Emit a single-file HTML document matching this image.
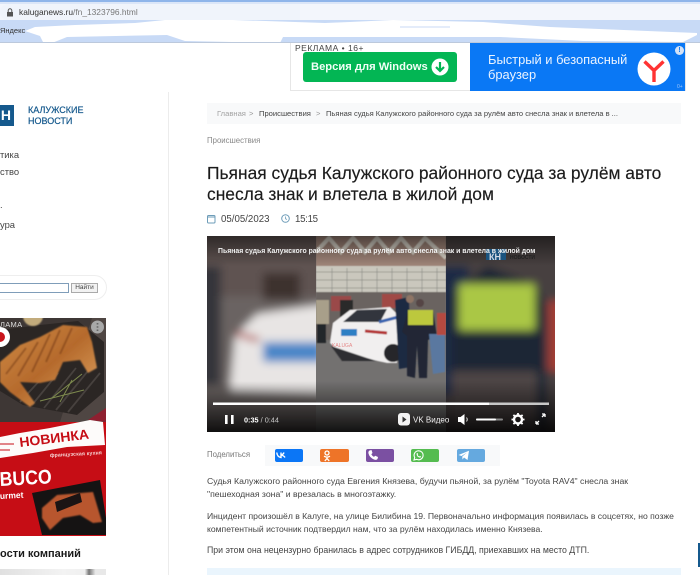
<!DOCTYPE html>
<html lang="ru"><head><meta charset="utf-8"><title>Калужские новости</title>
<style>
html,body{margin:0;padding:0;background:#fff}
body{width:700px;height:575px;overflow:hidden;position:relative;font-family:"Liberation Sans","Noto Sans CJK SC",sans-serif}
.a{position:absolute;white-space:nowrap}
svg{display:block}
.s{position:absolute;top:449px;height:13px;border-radius:2px}
</style></head><body>

<!-- browser chrome -->
<div class="a" style="left:0;top:0;width:700px;height:21px;background:#f3f6fc"></div>
<div class="a" style="left:0;top:1px;width:700px;height:3px;background:#dbe6f8"></div>
<div class="a" style="left:0;top:0;width:700px;height:1.5px;background:#8fb5ea"></div>
<div class="a" style="left:0;top:4px;width:300px;height:16px;background:#f0f4fb;border-radius:8px 0 0 8px"></div>
<svg class="a" style="left:6px;top:8px" width="8" height="9" viewBox="0 0 8 9"><path d="M1 4h6v4.5H1z" fill="#555"/><path d="M2.2 4V2.6a1.8 1.8 0 0 1 3.6 0V4" fill="none" stroke="#555"/></svg>
<div class="a" style="left:19px;top:6px;font-size:8.4px;line-height:12px;color:#777"><span style="color:#333">kaluganews.ru</span>/fn_1323796.html</div>
<svg class="a" style="left:0;top:20px" width="700" height="24" viewBox="0 0 700 24"><rect width="700" height="23" fill="#c8daf6"/><path d="M25 11 35 7 75 5 135 3 165 0H233L325 3 350 2 393 0 483 2 550 7 697 13V15L683 22 583 21 500 17 350 17 283 17 280 23 185 21 167 15 67 17 52 23 43 22 40 16Z" fill="#fff"/><path d="M400 7H450" stroke="#c8daf6"/><path d="M0 22.5H700" stroke="#bcc9dc"/></svg>
<div class="a" style="left:0;top:26px;font-size:7.5px;line-height:10px;color:#333">Яндекс</div>

<!-- ad banner -->
<div class="a" style="left:290px;top:43px;width:394px;height:47px;border:1px solid #e6e6e6;border-top:0"></div>
<div class="a" style="left:295px;top:43px;font-size:8.5px;line-height:11px;color:#444;letter-spacing:.5px">РЕКЛАМА • 16+</div>
<div class="a" style="left:303px;top:52px;width:154px;height:30px;background:#03b654;border-radius:3px"></div>
<div class="a" style="left:311px;top:59px;font-size:11.2px;line-height:16px;font-weight:700;color:#f2fff7">Версия для Windows</div>
<svg class="a" style="left:431px;top:58px" width="18" height="18" viewBox="0 0 18 18"><circle cx="9" cy="9" r="8.5" fill="#fff"/><path d="M9 4v9M5 9l4 4 4-4" fill="none" stroke="#03b654" stroke-width="2.2"/></svg>
<div class="a" style="left:470px;top:43px;width:215px;height:48px;background:#0a78f5"></div>
<div class="a" style="left:488px;top:52px;font-size:12.9px;line-height:15px;color:#eaf3ff">Быстрый и безопасный<br>браузер</div>
<svg class="a" style="left:636px;top:51px" width="36" height="36" viewBox="0 0 36 36"><circle cx="18" cy="18" r="16.5" fill="#fff"/><path d="M8.5 10.5 18 19.5 27.5 10.5M18 19.5V31" fill="none" stroke="#f33" stroke-width="3.4"/></svg>
<div class="a" style="left:675px;top:46px;width:9px;height:9px;border-radius:50%;background:#d4e2f6;font-size:7px;line-height:9px;text-align:center;color:#0a78f5;font-weight:700">!</div>
<div class="a" style="left:677px;top:84px;font-size:5px;line-height:6px;color:#9cc5fa">0+</div>

<!-- sidebar -->
<div class="a" style="left:168px;top:92px;width:1px;height:483px;background:#ececec"></div>
<div class="a" style="left:0;top:105px;width:14px;height:21px;background:#15598d;color:#fff;font-weight:700;font-size:14px;line-height:21px;text-align:right;overflow:hidden"><span style="margin-right:3px">Н</span></div>
<div class="a" style="left:28px;top:105px;font-size:9px;line-height:10.5px;color:#15598d;-webkit-text-stroke:.2px #15598d">КАЛУЖСКИЕ<br>НОВОСТИ</div>
<div class="a" style="left:0;top:149px;font-size:9.4px;line-height:12px;color:#444">тика</div>
<div class="a" style="left:0;top:166px;font-size:9.4px;line-height:12px;color:#444">ство</div>
<div class="a" style="left:0;top:199px;font-size:9.4px;line-height:12px;color:#444">.</div>
<div class="a" style="left:0;top:219px;font-size:9.4px;line-height:12px;color:#444">ура</div>
<div class="a" style="left:-30px;top:275px;width:135px;height:23px;border:1px solid #eee;border-radius:13px"></div>
<div class="a" style="left:-5px;top:283px;width:72px;height:8px;border:1px solid #7f9db9;background:#fff"></div>
<div class="a" style="left:71px;top:283px;width:25px;height:8px;border:1px solid #aaa;background:#f2f2f2;font-size:6.5px;line-height:8px;text-align:center;color:#444">Найти</div>

<!-- sidebar ad -->
<svg class="a" style="left:0;top:318px" width="106" height="218" viewBox="0 0 106 218">
<defs><filter id="b1"><feGaussianBlur stdDeviation=".7"/></filter><linearGradient id="ck" x1="0" y1="0" x2="1" y2="1"><stop offset="0" stop-color="#cf8a45"/><stop offset=".5" stop-color="#b56a2c"/><stop offset="1" stop-color="#e3a865"/></linearGradient></defs>
<rect width="106" height="104" fill="#3e3735"/>
<path d="M92 0H106V104H60Z" fill="#4f4643"/>
<path d="M0 12 40 7 78 3 104 24 104 74 77 97 23 87 0 73Z" fill="#2b2624"/>
<g stroke="#47413e" stroke-width="1.8"><path d="M20 84 42 60M32 87 58 55M44 90 76 50M56 92 92 48M68 94 100 55"/></g>
<g filter="url(#b1)"><path d="M0 44 20 27 40 19 63 7 87 9 92 24 97 50 88 55 80 42 63 44 55 62 40 65 20 64 35 85 30 89 10 74 0 64Z" fill="url(#ck)"/>
<g stroke="#6e3413" stroke-width="1.8" opacity=".55"><path d="M6 56 26 30M18 58 38 24M32 54 50 16M46 44 60 12M60 36 72 10"/></g></g>
<path d="M40 83 84 72M52 80 82 56M60 84 72 62" stroke="#7d8a4e" fill="none"/>
<path d="M0 9a10 10 0 0 1 0 20Z" fill="#fff"/><circle cx="0" cy="19" r="5" fill="#c9151c"/>
<circle cx="33" cy="-2" r="10" fill="#c2ab7c" filter="url(#b1)"/>
<path d="M88 102 106 90V104Z" fill="#8e2030"/>
<path d="M0 104V218H106V104Z" fill="#c60d15"/>
<path d="M0 119 20 115 50 110 90 102 103 104 105 127 67 129 33 135 0 140Z" fill="#fdfbfa"/>
<path d="M0 126H14M0 132H10" stroke="#c60d15"/>
<path d="M32 175 100 162 106 200 106 217 42 217Z" fill="#151313"/>
<path d="M42 190 57 177 93 174 102 204 93 205 80 197 63 200 50 212 42 200Z" fill="#b8562e" filter="url(#b1)"/>
<path d="M55 184 80 175 82 184 57 194Z" fill="#1b1414"/>
<text x="20" y="129" font-family="Liberation Sans,sans-serif" font-size="13.5" font-weight="700" fill="#c60d15" transform="rotate(-7 20 129)" textLength="70" lengthAdjust="spacingAndGlyphs">НОВИНКА</text>
<text x="50" y="139" font-family="Liberation Sans,sans-serif" font-size="5.2" font-weight="700" fill="#f7d5d5" transform="rotate(-3 50 139)" textLength="52">французская кухня</text>
<text x="0" y="168" font-family="Liberation Sans,sans-serif" font-size="20" font-weight="700" fill="#fff" transform="rotate(-3 0 168)" textLength="52" lengthAdjust="spacingAndGlyphs">BUCO</text>
<text x="0" y="181" font-family="Liberation Sans,sans-serif" font-size="8.5" font-weight="700" fill="#fff" transform="rotate(-3 0 181)">urmet</text>
<circle cx="97.5" cy="9" r="6.5" fill="#a8a8a8"/><path d="M97.5 5.500v.8M97.5 8.600v.8M97.5 11.700v.8" stroke="#222" stroke-width="1.7"/>
<text x="0" y="9" font-family="Liberation Sans,sans-serif" font-size="7.5" fill="#ddd" letter-spacing=".3">ЛАМА</text>
</svg>
<div class="a" style="left:0;top:547px;font-size:11px;line-height:14px;font-weight:700;color:#1a1a1a">ости компаний</div>
<div class="a" style="left:0;top:569px;width:106px;height:6px;background:linear-gradient(90deg,#e0e0e0,#f3f3f3 60%,#f0f0f0 80%,#777 84%,#e8e8e8 90%)"></div>

<!-- article head -->
<div class="a" style="left:207px;top:103px;width:474px;height:21px;background:#f8f9fa"></div>
<div class="a" style="left:217px;top:108px;font-size:7.6px;line-height:11px;color:#a2a2a2">Главная</div>
<div class="a" style="left:249px;top:108px;font-size:7.6px;line-height:11px;color:#999">&gt;</div>
<div class="a" style="left:259px;top:108px;font-size:7.6px;line-height:11px;color:#444">Происшествия</div>
<div class="a" style="left:316px;top:108px;font-size:7.6px;line-height:11px;color:#999">&gt;</div>
<div class="a" style="left:326px;top:108px;font-size:7.55px;line-height:11px;color:#444">Пьяная судья Калужского районного суда за рулём авто снесла знак и влетела в ...</div>
<div class="a" style="left:207px;top:135px;font-size:7.8px;line-height:11px;color:#888">Происшествия</div>
<div class="a" style="left:207px;top:163px;font-size:17.4px;line-height:20.5px;color:#1b1b1b;-webkit-text-stroke:.15px #1b1b1b">Пьяная судья Калужского районного суда за рулём авто<br>снесла знак и влетела в жилой дом</div>
<svg class="a" style="left:207px;top:214px" width="9" height="10" viewBox="0 0 9 10"><rect x=".5" y="1.5" width="7.5" height="7.5" rx="1" fill="none" stroke="#6d9cb8"/><path d="M.5 3h7.500" stroke="#6d9cb8"/></svg>
<div class="a" style="left:221px;top:214px;font-size:9.7px;line-height:12px;color:#444">05/05/2023</div>
<svg class="a" style="left:281px;top:214px" width="9" height="9" viewBox="0 0 9 9"><circle cx="4.5" cy="4.5" r="3.8" fill="none" stroke="#6d9cb8"/><path d="M4.5 2.500v2.200l1.500.8" fill="none" stroke="#6d9cb8" stroke-width=".8"/></svg>
<div class="a" style="left:295px;top:214px;font-size:9.7px;line-height:12px;color:#444;letter-spacing:-.3px">15:15</div>

<!-- video -->
<svg class="a" style="left:207px;top:236px" width="348" height="196" viewBox="0 0 348 196">
<defs>
<filter id="bl"><feGaussianBlur stdDeviation="4.5"/></filter>
<filter id="b2"><feGaussianBlur stdDeviation=".6"/></filter>
<linearGradient id="fd" x1="0" y1="0" x2="0" y2="1"><stop offset="0" stop-color="#000" stop-opacity=".5"/><stop offset="1" stop-color="#000" stop-opacity="0"/></linearGradient>
<linearGradient id="fu" x1="0" y1="0" x2="0" y2="1"><stop offset="0" stop-color="#000" stop-opacity="0"/><stop offset="1" stop-color="#000" stop-opacity=".85"/></linearGradient>
<clipPath id="lc"><rect width="109" height="196"/></clipPath>
<clipPath id="rc"><rect x="239" width="109" height="196"/></clipPath>
<clipPath id="cc"><rect x="109" width="130" height="196"/></clipPath>
</defs>
<rect width="348" height="196" fill="#3d3a3a"/>
<g clip-path="url(#lc)"><g filter="url(#bl)">
<rect x="-10" y="-10" width="130" height="216" fill="#6a6462"/><rect x="-10" y="-10" width="130" height="70" fill="#5f5351"/>
<rect x="-10" y="30" width="24" height="120" fill="#36363a"/><rect x="56" y="37" width="37" height="27" fill="#3c302f"/>
<path d="M23 155 28 100 50 78 120 68V158Z" fill="#e8e5e4"/><rect x="56" y="106" width="60" height="20" fill="#4a86c8"/><path d="M30 98 52 104" stroke="#b04a4a" stroke-width="5"/>
</g></g>
<g clip-path="url(#cc)">
<rect x="109" width="130" height="196" fill="#737170"/>
<g filter="url(#b2)"><rect x="109" width="130" height="34" fill="#a08578"/>
<path d="M109 16 122 2 134 16 146 2 158 16 170 2 182 16 194 2 206 16 218 2 239 22" stroke="#d9d3c8" stroke-width="4" fill="none"/>
<rect x="109" y="30" width="130" height="26" fill="#cac7bd"/>
<path d="M109 36H239M109 44H239M109 52H239M125 32V56M140 32V56M155 32V56M170 32V56M185 32V56M200 32V56M215 32V56M230 32V56" stroke="#8f8f88" stroke-width=".7"/>
<rect x="109" y="56" width="130" height="48" fill="#6a6460"/>
<rect x="124" y="60" width="20" height="15" fill="#9a4a4a"/><rect x="175" y="58" width="20" height="14" fill="#a04a44"/>
<rect x="109" y="64" width="13" height="24" fill="#a89f8a"/><rect x="110" y="88" width="9" height="19" fill="#23262c"/>
<rect x="133" y="64" width="13" height="17" fill="#2c2a2c"/>
<path d="M123 107 126 87 143 74 183 71 193 81 190 127 180 127 133 117Z" fill="#f1efef"/>
<path d="M136 86 150 74 180 73 173 86Z" fill="#33363e"/>
<rect x="134" y="93" width="16" height="7" fill="#2d7fc4"/>
<path d="M172 86 195 80" stroke="#3a65b0" stroke-width="3"/><path d="M158 95 180 97" stroke="#b43535" stroke-width="3"/>
<circle cx="186" cy="117" r="9" fill="#26262a"/>
<path d="M124 110 160 122 170 125H135Z" fill="#2f2f33"/>
<path d="M188 64 202 61 204 131 192 133Z" fill="#1d2a42"/>
<path d="M201 74 226 74 230 100 221 104 220 142 212 142 210 110 208 142 200 140 200 100 195 96Z" fill="#202836"/>
<rect x="201" y="74" width="25" height="15" fill="#bcc83c"/>
<path d="M222 98H238V136L226 138Z" fill="#5a78a0"/>
<rect x="230" y="77" width="9" height="22" fill="#b5483f"/>
<circle cx="213" cy="67" r="4" fill="#544"/><circle cx="203" cy="63" r="4" fill="#8f7565"/>
</g>
<text x="125" y="111" font-family="Liberation Sans,sans-serif" font-size="5" fill="#d44" opacity=".6">KALUGA</text>
</g>
<g clip-path="url(#rc)"><g filter="url(#bl)">
<rect x="229" y="-10" width="130" height="216" fill="#474040"/>
<rect x="232" y="30" width="30" height="130" fill="#1f2a44"/>
<path d="M245 60 280 30 330 50 338 70 340 196H245Z" fill="#1c2534"/>
<rect x="252" y="48" width="76" height="46" fill="#aac745"/>
<rect x="341" y="65" width="18" height="70" fill="#a23d34"/>
<rect x="245" y="135" width="85" height="61" fill="#4e4444"/>
</g></g>
<rect width="348" height="30" fill="url(#fd)"/>
<rect y="145" width="348" height="51" fill="url(#fu)"/>
<rect x="279" y="13" width="20" height="11" fill="#15598d" opacity=".85"/>
<text x="282" y="24" font-family="Liberation Sans,sans-serif" font-size="9" font-weight="700" fill="#d3dae6">КН</text>
<text x="303" y="23" font-family="Liberation Sans,sans-serif" font-size="5" font-weight="700" fill="#222">НОВОСТИ</text>
<text x="11" y="17" font-family="Liberation Sans,sans-serif" font-size="6.9" font-weight="700" fill="#f2f2f2">Пьяная судья Калужского районного суда за рулём авто снесла знак и влетела в жилой дом</text>
<rect x="6" y="166.5" width="336" height="2.5" fill="#c8c8c8"/><rect x="6" y="166.5" width="276" height="2.5" fill="#fff"/>
<rect x="18" y="179" width="2.6" height="9" fill="#fff"/><rect x="24" y="179" width="2.6" height="9" fill="#fff"/>
<text x="37" y="186.5" font-family="Liberation Sans,sans-serif" font-size="7.3" font-weight="700" fill="#fff">0:35<tspan fill="#ccc" font-weight="400"> / 0:44</tspan></text>
<rect x="191" y="177" width="12" height="12.5" rx="3" fill="#f2f2f2"/><path d="M195.5 180.500v6l4-3z" fill="#333"/>
<text x="206" y="186.5" font-family="Liberation Sans,sans-serif" font-size="8" fill="#f0f0f0">VK Видео</text>
<path d="M251 181h2.500l4-3v11l-4-3H251Z" fill="#fff"/><path d="M259.5 181.500q1.500 2 0 4" stroke="#ddd" fill="none"/>
<rect x="269" y="182.5" width="27" height="2" rx="1" fill="#888"/><rect x="269" y="182.5" width="20" height="2" rx="1" fill="#fff"/>
<circle cx="311" cy="183.5" r="4" fill="none" stroke="#fff" stroke-width="2.4"/>
<path d="M311 177v2M311 188v2M304.500 183.500h2M315.500 183.500h2M306.400 178.900l1.400 1.400M314.200 186.700l1.400 1.400M306.400 188.100l1.400-1.400M314.200 180.300l1.400-1.400" stroke="#fff" stroke-width="1.8"/>
<path d="M329 188l3-3M338 178l-3 3M329 188v-3M329 188h3M338 178h-3M338 178v3" stroke="#fff" stroke-width="1.3" fill="none"/>
</svg>

<!-- share -->
<div class="a" style="left:207px;top:449px;font-size:7.8px;line-height:11px;color:#777">Поделиться</div>
<div class="a" style="left:265px;top:445px;width:235px;height:21px;background:#f8f9fa"></div>
<div class="s" style="left:275px;width:28px;background:#0b76f6"></div>
<div class="s" style="left:320px;width:29px;background:#ee7428"></div>
<div class="s" style="left:366px;width:28px;background:#7b50a2"></div>
<div class="s" style="left:411px;width:28px;background:#55bc50"></div>
<div class="s" style="left:457px;width:28px;background:#65a9df"></div>
<svg class="a" style="left:276px;top:451px" width="11" height="8" viewBox="0 0 11 8"><path d="M.8 1.500Q1.200 6 5 6.500V1.500M5 4Q7.300 3.500 8 1.500M5.200 4Q8 4.700 9 6.500" fill="none" stroke="#fff" stroke-width="1.400"/></svg>
<svg class="a" style="left:322px;top:450px" width="10" height="12" viewBox="0 0 10 12"><circle cx="5" cy="3" r="2" fill="none" stroke="#fff" stroke-width="1.300"/><path d="M2 6.200Q5 8 8 6.200M5 7.500V8.500M2.800 11 5 8.500 7.200 11" fill="none" stroke="#fff" stroke-width="1.300"/></svg>
<svg class="a" style="left:367px;top:449px" width="12" height="12" viewBox="0 0 12 12"><path d="M2.500 1.500 4.500 1 5.500 4 4.300 5.200Q5.300 7 7 7.900L8.200 6.800 11 8 10.500 10Q9.500 11.500 7 10.500 2.500 8.500 1.500 4.500 1 2.500 2.500 1.500Z" fill="#fff"/></svg>
<svg class="a" style="left:412px;top:449px" width="13" height="13" viewBox="0 0 13 13"><path d="M2 11 2.700 8.500A4.500 4.500 0 1 1 4.600 10.300Z" fill="none" stroke="#fff" stroke-width="1.100"/><path d="M4.700 4.200 5.600 4 6.100 5.300 5.600 5.900Q6.200 7 7.300 7.500L8 6.900 9 7.500 8.700 8.400Q7.500 9 5.800 7.700 4.300 6.200 4.700 4.200Z" fill="#fff"/></svg>
<svg class="a" style="left:458px;top:450px" width="12" height="11" viewBox="0 0 12 11"><path d="M.5 5 11 .8 9.500 10 6 7.500 4.500 9.500 4.300 6.500 9 2.500 3.500 6Z" fill="#fff"/></svg>

<!-- body -->
<div class="a" style="left:207px;top:474.5px;font-size:8.7px;line-height:13px;color:#444">Судья Калужского районного суда Евгения Князева, будучи пьяной, за рулём "Toyota RAV4" снесла знак<br>"пешеходная зона" и врезалась в многоэтажку.</div>
<div class="a" style="left:207px;top:509.5px;font-size:8.6px;line-height:13px;color:#444">Инцидент произошёл в Калуге, на улице Билибина 19. Первоначально информация появилась в соцсетях, но позже<br>компетентный источник подтвердил нам, что за рулём находилась именно Князева.</div>
<div class="a" style="left:207px;top:544px;font-size:8.75px;line-height:13px;color:#444">При этом она нецензурно бранилась в адрес сотрудников ГИБДД, приехавших на место ДТП.</div>
<div class="a" style="left:207px;top:568px;width:474px;height:7px;background:#eaf5fd"></div>
<div class="a" style="left:698px;top:543px;width:2px;height:24px;background:#15598d"></div>
</body></html>
